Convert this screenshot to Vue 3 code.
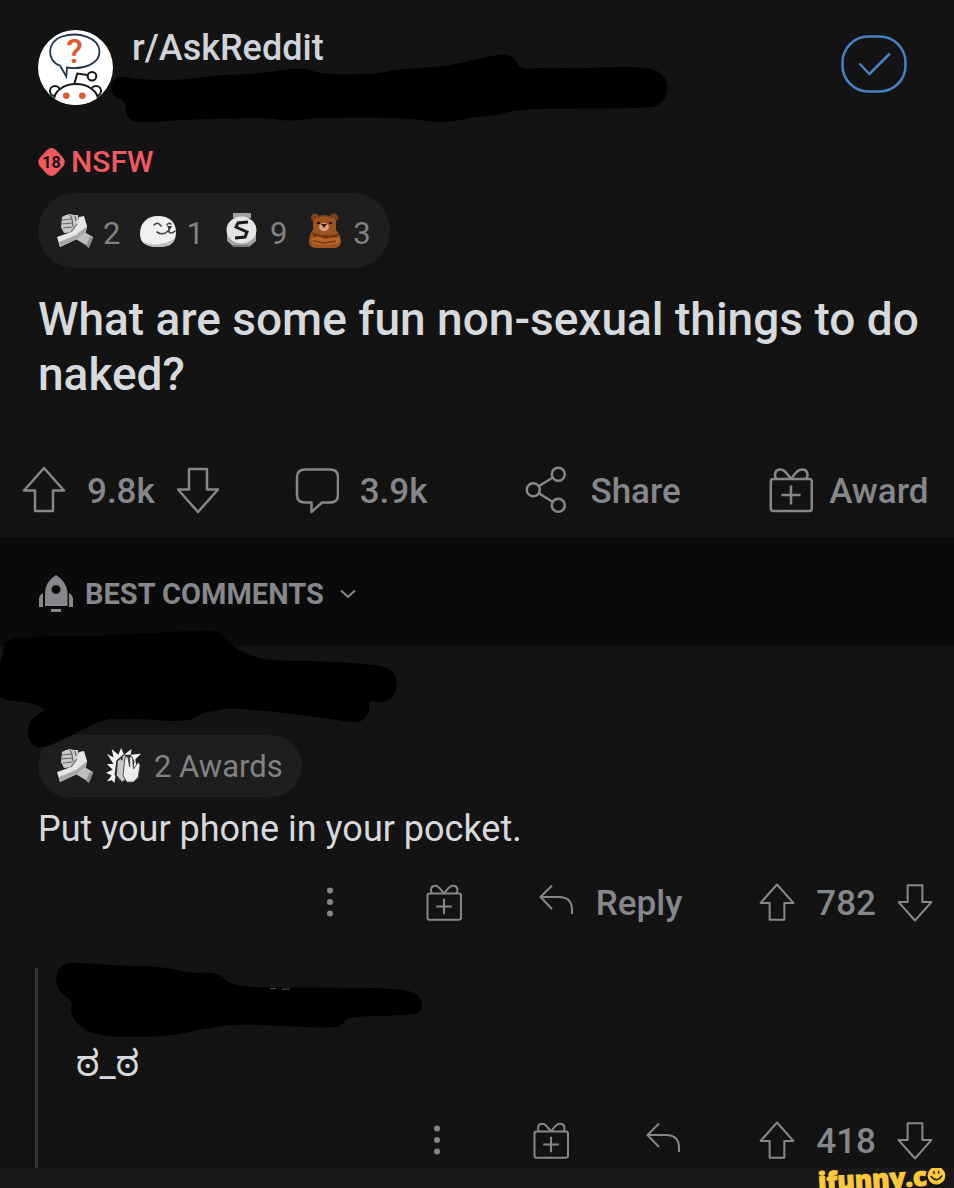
<template>
  <div class="thread">
    <svg class="sprite" aria-hidden="true">
      <symbol id="arrow" viewBox="0 0 44 50">
        <path d="M22 3 42 25.500H31V46H13V25.500H2Z" />
      </symbol>
      <symbol id="bubble" viewBox="0 0 44 50">
        <path d="M10 4.500H35Q43 4.500 43 12.500V30Q43 37.500 35 37.500H27L16.500 47V37.500H10Q2 37.500 2 30V12.500Q2 4.500 10 4.500Z" />
      </symbol>
      <symbol id="share" viewBox="0 0 44 50">
        <circle cx="33.300" cy="9.300" r="6.500" />
        <circle cx="8.300" cy="24.700" r="6.500" />
        <circle cx="33.300" cy="40.300" r="6.500" />
        <path d="M14 21 27.500 12.700M14 28.400 27.500 36.700" />
      </symbol>
      <symbol id="gift" viewBox="0 0 44 50">
        <rect x="1.800" y="14" width="41" height="32" rx="2.500" />
        <path d="M22 14C18 9 16 4.500 11.500 4.500 6 4.500 4.500 10 7.500 14M22 14C26 9 28 4.500 33 4.500 38.500 4.500 40 10 37 14M22 20.500V39.500M12.500 30H31.500" />
      </symbol>
      <symbol id="reply" viewBox="0 0 36 36">
        <path d="M13 1.500 1.500 13 13 25M1.500 13H20Q33 13 33 26V30" />
      </symbol>
      <symbol id="dots" viewBox="0 0 38 36">
        <g fill="#85878a" stroke="none">
          <circle cx="19" cy="6.500" r="3" />
          <circle cx="19" cy="18" r="3" />
          <circle cx="19" cy="29.500" r="3" />
        </g>
      </symbol>
      <!-- awards -->
      <symbol id="hands" viewBox="0 0 38 36">
        <path fill="#bdbdbd" d="M19 20 25 17 37 24 33 34 18 25Z" />
        <path fill="#8e8e8e" d="M30 33 34 24 37 25 33 35Z" />
        <path fill="#c9c9c9" d="M6 4 10 2 14 1 18 2 22 2 23 12 18 19 8 20 5 14Z" />
        <path fill="#e6e6e6" d="M1 24 15 19 21 11 23 4 28 3 31 13 30 19 21 26 4 34Z" />
        <path fill="#a8a8a8" d="M4 34 3 29 20 22 30 14 30 19 21 26Z" />
        <path fill="none" stroke="#666" stroke-width="1.200" d="M6 7 16 6M5 11 16 10M7 15 16 14M14 2 16 6 17 14M19 3 20 8M15 19 21 11" />
      </symbol>
      <symbol id="seal" viewBox="0 0 38 36">
        <path fill="#f1f1f1" d="M1 21C1 10 8 3 19 3 30 3 37 9 37 19 37 29 32 34 19 34 6 34 1 29 1 21Z" />
        <path fill="#bcbcbc" d="M4 28C9 33 27 33 36 25 34 32 29 34 19 34 11 34 6 32 4 28Z" />
        <path fill="none" stroke="#444" stroke-width="1.600" stroke-linecap="round" d="M15 12Q19 8 22 13M28 12Q30 9 32 11M18 19Q24 23 29 18 32 22 36 18M30 14V18" />
        <path fill="#333" d="M28 13H33L31 17Z" />
      </symbol>
      <symbol id="silver" viewBox="0 0 38 36">
        <path fill="#a2a2a2" d="M10 0H28V5H10ZM4 21V28L11 34H26L33 28V20Z" />
        <path fill="#777" d="M10 32H27V34H10Z" />
        <ellipse cx="18.500" cy="17" rx="15" ry="13.500" fill="#e5e5e5" />
        <path fill="none" stroke="#1c1c1c" stroke-width="3" d="M25 9 15 10 13 14 24 19 22 24 12 25" />
      </symbol>
      <symbol id="bear" viewBox="0 0 38 36">
        <circle cx="9" cy="4.500" r="4" fill="#7d4017" />
        <circle cx="28" cy="4.500" r="4" fill="#7d4017" />
        <path fill="#9c531f" d="M7 10C7 0 30 0 30 10V17Q35 22 35 30 33 36 25 35H12Q3 35 3 29 3 21 7 17Z" />
        <path fill="#6e3511" d="M6 19Q12 23 18 22 27 24 33 20L31 25Q22 23 17 27L8 25Z" />
        <path fill="#bd6423" d="M5 26Q11 21 20 26L32 24Q36 29 31 31L21 32 7 31Z" />
        <path fill="none" stroke="#753a14" stroke-width="1.300" d="M7 28 18 30 30 28M11 5Q18 0 26 5" />
        <ellipse cx="18" cy="14" rx="5" ry="4" fill="#d5a679" />
        <path fill="#28150c" d="M15 11H21L18 15ZM11 9H14V11H11ZM23 9H26V11H23Z" />
      </symbol>
      <symbol id="clap" viewBox="0 0 38 38">
        <path fill="#f2f2f2" d="M1 6 8 10 6 1 13 7 16 0 19 7 27 1 26 7 37 6 31 12 32 20 10 29 9 37 6 34 1 35 6 29 0 26 7 23 1 17 8 17Z" />
        <path fill="#282828" d="M11 13 18 7 26 7 30 14 28 31 14 36 9 28Z" />
        <path fill="#c8c8c8" stroke="#3b3b3b" d="M11 29 12 14 15 11 17 13 17 9 20 7 22 10 24 31 17 36Z" />
        <path fill="#ededed" stroke="#444" d="M18 29 20 10 23 9 25 20 25 9 28 10 29 22 34 15 36 18 34 31 29 36 22 36Z" />
      </symbol>
    </svg>

    <article class="post">
      <header class="post-header">
        <svg class="avatar" viewBox="0 0 75 75" aria-hidden="true">
          <defs>
            <clipPath id="round"><circle cx="37.500" cy="37.500" r="37.500" /></clipPath>
          </defs>
          <g clip-path="url(#round)" fill="#fff" stroke="#171717" stroke-width="2">
            <rect width="75" height="75" stroke="none" />
            <circle cx="17" cy="61" r="5" />
            <circle cx="58" cy="61" r="5" />
            <ellipse cx="38" cy="70" rx="22" ry="16" />
            <path fill="none" d="M36.300 54 39.300 43.500 49.500 45" />
            <circle cx="54" cy="46.300" r="4.300" />
            <path stroke="#24364b" stroke-width="1.800" d="M22 35.500C8 31 9 11 24 6.500 41 1 61 8 61.500 21 62 34 45 40 29 37.500L28.300 46.500Z" />
            <g fill="#dc5a2c" stroke="none">
              <circle cx="28.300" cy="65.700" r="3.300" />
              <circle cx="44.300" cy="65.700" r="3.300" />
              <text class="question" x="36.500" y="33" text-anchor="middle">?</text>
            </g>
          </g>
        </svg>
        <a class="subreddit" href="#">r/AskReddit</a>
        <button class="joined" aria-label="Joined">
          <svg viewBox="0 0 66 58">
            <rect x="1.500" y="1.500" width="63" height="55" rx="26" />
            <path d="M18.500 28.500 28.500 39 49 18.500" />
          </svg>
        </button>
        <svg class="scribble scribble-header" viewBox="110 54 558 70" aria-hidden="true">
          <path :d="smooth(scribbles.header)" />
        </svg>
      </header>

      <div class="nsfw">
        <svg viewBox="0 0 27 30" aria-hidden="true">
          <path d="M9 3Q13.500-1 18 3L24.500 10Q29 15 24.500 20L18 27Q13.500 31 9 27L2.500 20Q-2 15 2.500 10Z" />
          <text x="13.500" y="20.500" text-anchor="middle">18</text>
        </svg>
        <span>NSFW</span>
      </div>

      <div class="awards">
        <span v-for="award in awards" :key="award.icon" class="award">
          <svg class="award-icon" aria-hidden="true"><use :href="`#${award.icon}`" /></svg>
          <span class="award-count">{{ award.count }}</span>
        </span>
      </div>

      <h1>What are some fun non-sexual things to do naked?</h1>

      <div class="post-actions">
        <div class="action">
          <button aria-label="Upvote"><svg class="icon"><use href="#arrow" /></svg></button>
          <span>9.8k</span>
          <button aria-label="Downvote"><svg class="icon down"><use href="#arrow" /></svg></button>
        </div>
        <button class="action"><svg class="icon"><use href="#bubble" /></svg><span>3.9k</span></button>
        <button class="action"><svg class="icon"><use href="#share" /></svg><span>Share</span></button>
        <button class="action tight"><svg class="icon"><use href="#gift" /></svg><span>Award</span></button>
      </div>
    </article>

    <div class="sort-bar">
      <button class="sort">
        <svg class="rocket" viewBox="0 0 34 38" aria-hidden="true">
          <path fill-rule="evenodd" d="M17 0Q28 7 28.500 18V31H6V18Q6 7 17 0ZM17 10A4.500 4.500 0 1 0 17 19 4.500 4.500 0 1 0 17 10Z" />
          <path d="M4 18V32H0V24Q0 20 4 18ZM30 18V32H34V24Q34 20 30 18ZM12 34H22V37H12Z" />
        </svg>
        <span>BEST COMMENTS</span>
        <svg class="chevron" viewBox="0 0 16 10" aria-hidden="true"><path d="M1 1.500 8 8 15 1.500" /></svg>
      </button>
    </div>

    <section class="comment">
      <svg class="scribble scribble-comment" viewBox="0 629 398 120" aria-hidden="true">
        <path :d="smooth(scribbles.comment)" />
      </svg>
      <div class="awards awards-small">
        <svg class="award-icon" aria-hidden="true"><use href="#hands" /></svg>
        <svg class="award-icon" aria-hidden="true"><use href="#clap" /></svg>
        <span>2 Awards</span>
      </div>
      <p class="comment-text">Put your phone in your pocket.</p>
      <div class="comment-actions">
        <button aria-label="More"><svg class="more"><use href="#dots" /></svg></button>
        <button aria-label="Give award"><svg class="icon-small"><use href="#gift" /></svg></button>
        <button class="action"><svg class="icon-reply"><use href="#reply" /></svg><span>Reply</span></button>
        <div class="action">
          <button aria-label="Upvote"><svg class="icon-small"><use href="#arrow" /></svg></button>
          <span>782</span>
          <button aria-label="Downvote"><svg class="icon-small down"><use href="#arrow" /></svg></button>
        </div>
      </div>
    </section>

    <section class="reply">
      <svg class="scribble scribble-reply" viewBox="55 961 367 78" aria-hidden="true">
        <path :d="smooth(scribbles.reply)" />
        <path class="remnant" d="M270 988.500H276M282 989H290" />
      </svg>
      <p class="reply-text">ಠ_ಠ</p>
      <div class="comment-actions">
        <button aria-label="More"><svg class="more"><use href="#dots" /></svg></button>
        <button aria-label="Give award"><svg class="icon-small"><use href="#gift" /></svg></button>
        <button aria-label="Reply"><svg class="icon-reply"><use href="#reply" /></svg></button>
        <div class="action">
          <button aria-label="Upvote"><svg class="icon-small"><use href="#arrow" /></svg></button>
          <span>418</span>
          <button aria-label="Downvote"><svg class="icon-small down"><use href="#arrow" /></svg></button>
        </div>
      </div>
    </section>

    <footer class="strip">
      <div class="watermark">
        <span>ifunny.c</span>
        <svg viewBox="0 0 32 32" aria-hidden="true">
          <circle cx="16" cy="16" r="15" fill="#fdc93a" />
          <path fill="none" stroke="#17171a" stroke-width="2.500" stroke-linecap="round" d="M12 9V12M20 9V12M7 17Q16 29 25 17" />
        </svg>
      </div>
    </footer>
  </div>
</template>

<script setup>
const awards = [
  { icon: "hands", count: 2 },
  { icon: "seal", count: 1 },
  { icon: "silver", count: 9 },
  { icon: "bear", count: 3 }
];

// outlines of the marker strokes that hide the user names
const scribbles = {
  header: "112 86 119 78 135 82 181 83 222 77 255 77 303 69 320 77 374 77 403 71 448 69 499 56 513 59 519 72 544 70 581 71 618 69 650 70 662 77 666 87 661 102 647 106 518 106 499 113 477 114 442 121 407 115 322 115 285 119 272 115 189 117 144 120 130 118 128 108 127 98 116 96",
  comment: "-6 668 5 662 5 648 11 641 22 639 100 639 207 632 220 635 229 648 260 663 307 663 377 667 392 672 395 685 391 697 380 700 366 698 367 711 361 719 353 720 300 712 230 705 213 709 203 710 187 720 140 716 123 717 103 716 67 735 43 746 33 743 29 732 34 719 50 711 36 700 -6 697",
  reply: "58 980 61 969 70 964 113 968 163 969 190 976 217 974 231 989 287 990 347 990 393 991 413 994 420 1001 419 1010 411 1013 345 1014 341 1023 333 1026 237 1021 207 1026 167 1034 113 1035 85 1029 72 1013 76 1001 61 990"
};

// closed curve through the midpoints of the outline
function smooth(outline) {
  const n = outline.split(" ").map(Number);
  const points = [];
  for (let i = 0; i < n.length; i += 2) points.push([n[i], n[i + 1]]);
  const mid = (a, b) => `${(a[0] + b[0]) / 2} ${(a[1] + b[1]) / 2}`;
  const last = points[points.length - 1];
  let d = `M${mid(last, points[0])}`;
  points.forEach((p, i) => {
    d += `Q${p[0]} ${p[1]} ${mid(p, points[(i + 1) % points.length])}`;
  });
  return d + "Z";
}
</script>

<style>
body {
  margin: 0;
  background: #131313;
}
</style>

<style scoped>
.thread {
  color: #d7dadc;
  background: #131313;
  font-family: Roboto, "Liberation Sans", sans-serif;
  overflow: hidden;
}

.sprite {
  display: none;
}

button {
  display: flex;
  padding: 0;
  border: 0;
  background: none;
  color: inherit;
  font: inherit;
  cursor: pointer;
}

svg {
  display: block;
  flex: none;
}

.post {
  padding: 30px 24px 22px 38px;
}

.post-header {
  position: relative;
  display: flex;
  align-items: flex-start;
  height: 75px;
}

.avatar {
  width: 75px;
  height: 75px;
}

.question {
  font: 500 34px Roboto, sans-serif;
}

.subreddit {
  margin-left: 19px;
  color: #d0d4d8;
  font-size: 36px;
  font-weight: 500;
  line-height: 36px;
  text-decoration: none;
}

.joined {
  margin: 5px 23px 0 auto;
}

.joined svg {
  width: 66px;
  height: 58px;
  fill: none;
  stroke: #4584c6;
  stroke-width: 2.5;
}

.scribble {
  position: absolute;
  fill: #000;
  stroke: #000;
  stroke-width: 5;
  stroke-linejoin: round;
}

.scribble-header {
  top: 24px;
  left: 72px;
  width: 558px;
  height: 70px;
}

.nsfw {
  display: flex;
  align-items: center;
  gap: 6px;
  margin-top: 39px;
  color: #f05a5e;
  font-size: 30px;
  font-weight: 500;
  line-height: 36px;
}

.nsfw svg {
  width: 27px;
  height: 30px;
  fill: #f05a5e;
}

.nsfw text {
  fill: #131313;
  font: 700 16px Roboto, sans-serif;
}

.awards {
  display: flex;
  align-items: center;
  gap: 19px;
  width: fit-content;
  height: 75px;
  margin-top: 13px;
  padding: 0 19px 0 18px;
  border-radius: 38px;
  background: #1e1e1e;
  color: #808284;
  box-sizing: border-box;
}

.award {
  display: flex;
  align-items: center;
  gap: 9px;
}

.award-icon {
  width: 38px;
  height: 36px;
}

.award-count {
  padding-top: 6px;
  font-size: 31px;
  line-height: 36px;
}

h1 {
  margin: 24px 0 0;
  font-size: 46px;
  font-weight: 500;
  line-height: 55px;
}

.post-actions {
  display: grid;
  grid-template-columns: 273fr 231fr 244fr 161fr;
  margin: 63px 0 0 -16px;
}

.action {
  display: flex;
  align-items: center;
  gap: 21px;
  color: #85878a;
  font-size: 35px;
  font-weight: 500;
  line-height: 42px;
}

.action span {
  padding-top: 4px;
}

.tight {
  gap: 16px;
}

.icon,
.icon-small,
.icon-reply,
.more {
  fill: none;
  stroke: #85878a;
  stroke-width: 2.5;
  stroke-linejoin: round;
}

.icon {
  width: 44px;
  height: 50px;
}

.icon-small {
  width: 36px;
  height: 41px;
}

.icon-reply {
  width: 36px;
  height: 36px;
  stroke-width: 2;
}

.more {
  width: 38px;
  height: 36px;
}

.down {
  transform: rotate(180deg);
}

.sort-bar {
  padding: 38px 39px 33px;
  background: #0a0a0a;
}

.sort {
  align-items: center;
  gap: 12px;
  color: #85878a;
  font-size: 29px;
  font-weight: 700;
  line-height: 38px;
}

.rocket {
  width: 34px;
  height: 38px;
  fill: #85878a;
}

.chevron {
  width: 16px;
  height: 10px;
  margin-left: 4px;
  fill: none;
  stroke: #85878a;
  stroke-width: 2;
}

.comment {
  position: relative;
  padding: 89px 21px 0 38px;
}

.scribble-comment {
  top: -17px;
  left: 0;
  width: 398px;
  height: 120px;
}

.awards-small {
  gap: 11px;
  height: 62px;
  margin-top: 0;
  font-size: 31px;
}

.comment-text {
  margin: 11px 0 0;
  font-size: 36px;
  line-height: 42px;
}

.comment-actions {
  display: flex;
  justify-content: flex-end;
  align-items: center;
  gap: 77px;
  height: 42px;
  margin-top: 31px;
}

.reply {
  position: relative;
  margin: 45px 0 0 35px;
  padding: 72px 21px 7px 38px;
  border-left: 3px solid #343434;
}

.scribble-reply {
  top: -7px;
  left: 17px;
  width: 367px;
  height: 78px;
}

.remnant {
  stroke: #555;
  stroke-width: 1;
}

.reply-text {
  margin: 0;
  font-family: Roboto, "Noto Sans Kannada", "Noto Sans", sans-serif;
  font-size: 36px;
  line-height: 48px;
}

.strip {
  display: flex;
  justify-content: flex-end;
  height: 20px;
  padding-right: 8px;
  background: #18181b;
  overflow: hidden;
}

.watermark {
  display: flex;
  align-items: center;
  height: 20px;
  color: #fdc93a;
  font: 800 26px/20px "Open Sans", sans-serif;
  -webkit-text-stroke: 1px #fdc93a;
  transform: rotate(-3deg);
}

.watermark svg {
  width: 19px;
  height: 19px;
}
</style>
